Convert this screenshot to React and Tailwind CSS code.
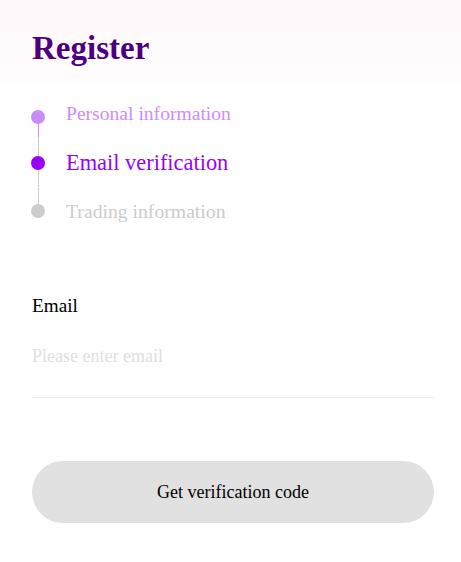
import React from 'react';

const steps = [
  {
    label: 'Personal information',
    rowH: 'h-[41px]',
    textCls: 'mt-[5px] text-[19.6px] leading-[25px] text-[#cf8cf8]',
    dot: 'bg-[#c98bf8]',
    top: 'bg-transparent',
    topH: 'h-[14px]',
    bottom: 'bg-[#c98bf8]',
  },
  {
    label: 'Email verification',
    rowH: 'h-[50px]',
    textCls: 'mt-[11px] text-[22.4px] leading-[29px] text-[#9900ff]',
    dot: 'bg-[#9900ff]',
    top: 'bg-[#cccccc]',
    topH: 'h-[19px]',
    bottom: 'bg-[#cccccc]',
  },
  {
    label: 'Trading information',
    rowH: 'h-[48px]',
    textCls: 'mt-[11px] text-[19.7px] leading-[24px] text-[#cccccc]',
    dot: 'bg-[#cccccc]',
    top: 'bg-[#cccccc]',
    topH: 'h-[16px]',
    bottom: 'bg-transparent',
  },
];

export default function App() {
  return (
    <div
      className="min-h-[562px] w-full bg-white"
      style={{ fontFamily: '"Liberation Serif", "Times New Roman", serif' }}
    >
      {/* Header */}
      <div className="h-[85px] bg-linear-to-b from-[#fff7fa] to-[#fffdfe] pl-8 pt-[28px]">
        <h1 className="text-[33px] leading-[40px] font-bold text-[#4b0082]">Register</h1>
      </div>

      {/* Steps */}
      <div className="mt-[11px] pl-[31px] flex flex-col">
        {steps.map((s, i) => (
          <div key={s.label} className={`flex ${s.rowH} ${i === 2 ? 'mt-[1px]' : ''}`}>
            <div className="w-[14px] flex flex-col items-center">
              <div className={`w-px ${s.topH} ${s.top}`}></div>
              <div className={`w-[14px] h-[14px] rounded-full ${s.dot}`}></div>
              <div className={`w-px flex-1 ${s.bottom}`}></div>
            </div>
            <div className={`ml-[21px] ${s.textCls}`}>{s.label}</div>
          </div>
        ))}
      </div>

      {/* Form */}
      <div className="pl-8 pr-[27px]">
        <label className="block mt-[58px] text-[19.2px] leading-[24px] text-black">Email</label>
        <input
          type="text"
          placeholder="Please enter email"
          className="block w-full mt-[26px] h-[54px] pb-[29px] border-b border-[#f0f0f0] text-[18px] leading-[24px] outline-none placeholder:text-[#e0e0e0]"
          style={{ fontFamily: '"Liberation Serif", "Times New Roman", serif' }}
        />
        <button className="mt-[63px] w-full h-[62px] rounded-full bg-[#e1e1e1] text-[18px] text-black">
          Get verification code
        </button>
      </div>
    </div>
  );
}
